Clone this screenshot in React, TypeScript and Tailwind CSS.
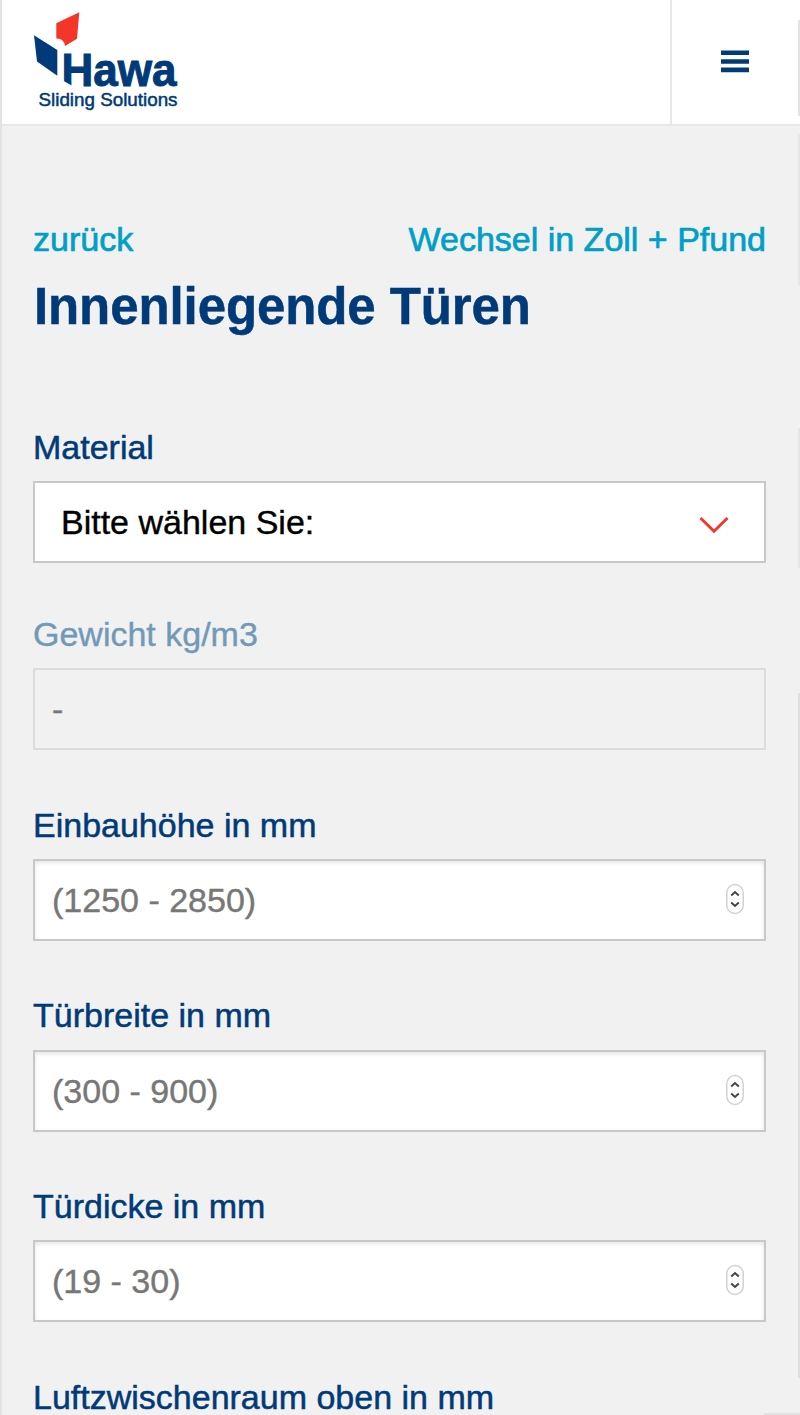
import clsx from "clsx";

type Field = {
  id: string;
  label: string;
  placeholder: string;
  spacing: string;
  disabled?: boolean;
};

const FIELDS: Field[] = [
  { id: "weight", label: "Gewicht kg/m3", placeholder: "-", spacing: "mt-[51px]", disabled: true },
  { id: "height", label: "Einbauhöhe in mm", placeholder: "(1250 - 2850)", spacing: "mt-[55px]" },
  { id: "width", label: "Türbreite in mm", placeholder: "(300 - 900)", spacing: "mt-[54px]" },
  { id: "thickness", label: "Türdicke in mm", placeholder: "(19 - 30)", spacing: "mt-[54px]" },
];

function Logo() {
  return (
    <svg width="190" height="124" viewBox="0 0 190 124" className="block" aria-label="Hawa Sliding Solutions">
      <path d="M56.3 23.3 79.3 12.2 77 38.8 65 46Q64 38 56.3 38.4Z" fill="#f43529" />
      <path d="M34 35.3 57.3 50V75.8L37 61.5Z" fill="#003a78" />
      <text
        x="61.5"
        y="85.7"
        textLength="115"
        lengthAdjust="spacingAndGlyphs"
        stroke="#003a78"
        strokeWidth="1"
        className="fill-[#003a78] font-['Liberation_Sans',Arial,sans-serif] text-[47px] font-bold"
      >
        Hawa
      </text>
      {/* slanted foot of the H */}
      <path d="M61 79.5 73 86.2V88H61Z" fill="#fff" />
      <text
        x="38.5"
        y="105.7"
        textLength="139"
        lengthAdjust="spacingAndGlyphs"
        stroke="#003a78"
        strokeWidth="0.5"
        className="fill-[#003a78] font-['Liberation_Sans',Arial,sans-serif] text-[18px]"
      >
        Sliding Solutions
      </text>
    </svg>
  );
}

function Stepper() {
  return (
    <svg width="20" height="34" viewBox="0 0 20 34" fill="none" className="-mt-[3px]" aria-hidden="true">
      <rect x="1.75" y="2.5" width="16.5" height="29" rx="8.25" fill="#fff" stroke="#d2d2d2" strokeWidth="1.5" />
      <path d="M6.2 13.4 10 10 13.8 13.4M6.2 20.6 10 24 13.8 20.6" stroke="#444" strokeWidth="2" />
    </svg>
  );
}

function NumberField({ id, label, placeholder, spacing, disabled }: Field) {
  return (
    <div className={spacing}>
      <label
        htmlFor={id}
        className={clsx(
          "block h-10 leading-10",
          disabled
            ? "text-[#7399b8] [-webkit-text-stroke:0.4px_#7399b8]"
            : "text-[#003a78] [-webkit-text-stroke:0.5px_#003a78]"
        )}
      >
        {label}
      </label>
      <div
        className={clsx(
          "flex h-[82px] items-center border-2 pr-[19px] pl-[17px]",
          id === "width" ? "mt-[15px]" : "mt-3.5",
          disabled ? "border-[#dcdcdc]" : "border-[#c8c8c8] bg-white shadow-[inset_0_2px_4px_rgba(0,0,0,0.1)]"
        )}
      >
        <input
          id={id}
          placeholder={placeholder}
          disabled={disabled}
          className="h-10 min-w-0 flex-1 bg-transparent leading-10 outline-none [-webkit-text-stroke:0.4px_#777] placeholder:text-[#777] placeholder:opacity-100"
        />
        {!disabled && <Stepper />}
      </div>
    </div>
  );
}

export default function App() {
  return (
    <div className="relative h-[1415px] overflow-hidden border-l-2 border-[#e3e3e3] bg-[#f1f1f1] font-['Liberation_Sans',Arial,sans-serif] text-[34px]">
      <header className="flex h-[126px] border-b-2 border-[#e8e8e8] bg-white">
        <a href="#" className="-ml-0.5 flex-1">
          <Logo />
        </a>
        <button className="flex w-[130px] items-start border-l-2 border-[#e8e8e8] pt-[50px] pl-[49px]" aria-label="Menü">
          <svg width="28" height="24" viewBox="0 0 28 24" aria-hidden="true">
            <path d="M0 .5h28v4.6H0zM0 9.2h28v4.6H0zM0 17.6h28v4.6H0z" fill="#003a78" />
          </svg>
        </button>
      </header>

      <main className="pr-[34px] pl-[31px]">
        <nav className="mt-[93px] flex h-10 justify-between leading-10 text-[#009fc8] [-webkit-text-stroke:0.7px_#009fc8]">
          <a href="#">zurück</a>
          <a href="#">Wechsel in Zoll + Pfund</a>
        </nav>
        <h1 className="mt-[18px] h-[60px] pl-px text-[51px] leading-[60px] font-bold tracking-[-0.1px] text-[#003a78] [-webkit-text-stroke:0.5px_#003a78]">
          Innenliegende Türen
        </h1>

        <form>
          <div className="mt-[90px]">
            <label className="block h-10 leading-10 text-[#003a78] [-webkit-text-stroke:0.5px_#003a78]">Material</label>
            <button
              type="button"
              className="mt-3.5 flex h-[82px] w-full items-center justify-between border-2 border-[#c8c8c8] bg-white pr-[35px] pl-[26px] text-black"
            >
              <span className="leading-10 [-webkit-text-stroke:0.4px_#000]">Bitte wählen Sie:</span>
              <svg width="30" height="18" viewBox="0 0 30 18" fill="none" className="mt-1.5" aria-hidden="true">
                <path d="M1.5 2 15 15.2 28.5 2" stroke="#fa3228" strokeWidth="2.8" />
              </svg>
            </button>
          </div>
          {FIELDS.map((field) => (
            <NumberField key={field.id} {...field} />
          ))}
          <label className="mt-[55px] block h-10 leading-10 text-[#003a78] [-webkit-text-stroke:0.5px_#003a78]">
            Luftzwischenraum oben in mm
          </label>
        </form>
      </main>

      {/* faint page edge */}
      <div className="pointer-events-none absolute top-5 right-0 h-24 w-0.5 bg-[#e4e4e4]" />
      <div className="pointer-events-none absolute top-[134px] right-0 h-[152px] w-0.5 bg-[#e6e6e6]" />
      <div className="pointer-events-none absolute top-[428px] right-0 h-[140px] w-0.5 bg-[#e6e6e6]" />
      <div className="pointer-events-none absolute top-[693px] right-0 h-[685px] w-0.5 bg-[#e0e0e0]" />
      <div className="pointer-events-none absolute right-0 bottom-0 h-0.5 w-9 bg-[#e2e2e2]" />
    </div>
  );
}
